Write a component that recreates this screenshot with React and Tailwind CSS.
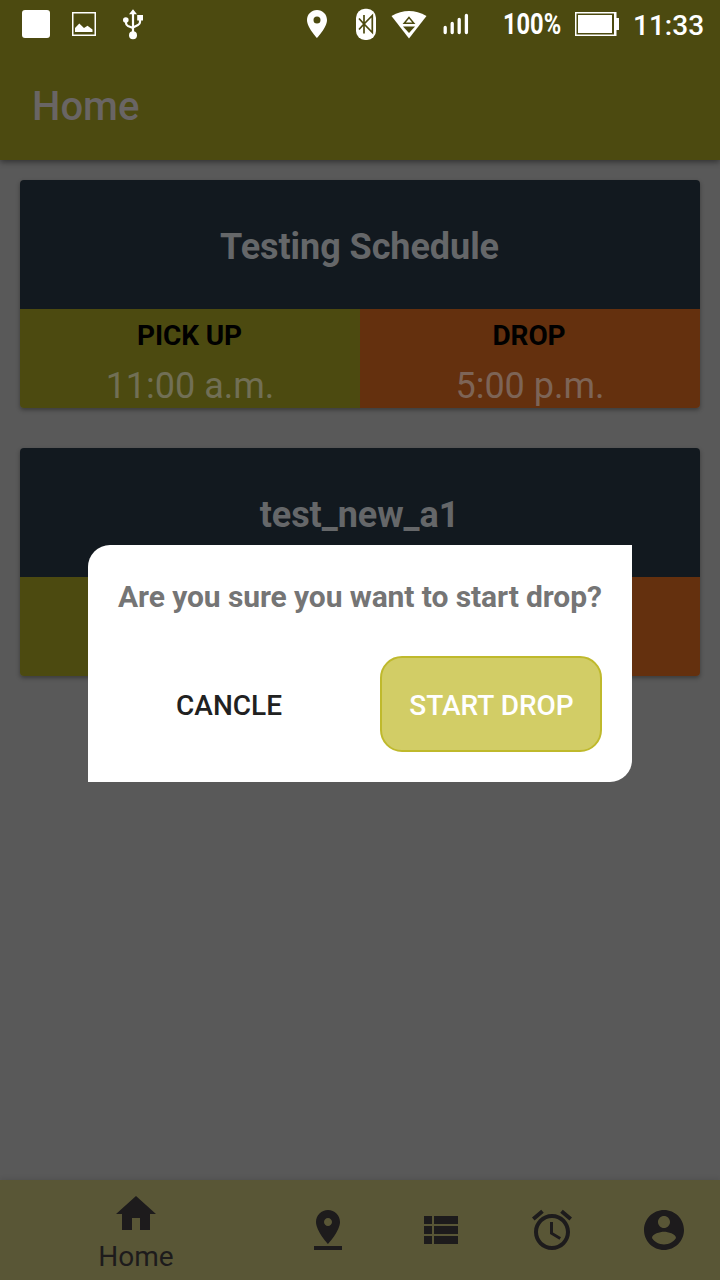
const schedules = [
  { id: 1, name: "Testing Schedule", pickup: "11:00 a.m.", drop: "5:00 p.m." },
  { id: 2, name: "test_new_a1", pickup: null, drop: null },
]

const tabs = [
  { id: "stops", path: "M18 8c0-3.31-2.69-6-6-6S6 4.69 6 8c0 4.5 6 11 6 11s6-6.5 6-11zm-8 0c0-1.1.9-2 2-2s2 .9 2 2-.89 2-2 2c-1.1 0-2-.9-2-2zM5 20v2h14v-2H5z" },
  { id: "list", path: "M4 14h4v-4H4v4zm0 5h4v-4H4v4zM4 9h4V5H4v4zm5 5h12v-4H9v4zm0 5h12v-4H9v4zM9 5v4h12V5H9z" },
  { id: "alarm", path: "M22 5.72l-4.6-3.86-1.29 1.53 4.6 3.86L22 5.72zM7.88 3.39L6.6 1.86 2 5.71l1.29 1.53 4.59-3.85zM12.5 8H11v6l4.75 2.85.75-1.23-4-2.37V8zM12 4c-4.97 0-9 4.03-9 9s4.02 9 9 9c4.97 0 9-4.03 9-9s-4.03-9-9-9zm0 16c-3.87 0-7-3.13-7-7s3.13-7 7-7 7 3.13 7 7-3.13 7-7 7z" },
  { id: "account", path: "M12 2C6.48 2 2 6.48 2 12s4.48 10 10 10 10-4.48 10-10S17.52 2 12 2zm0 3c1.66 0 3 1.34 3 3s-1.34 3-3 3-3-1.34-3-3 1.34-3 3-3zm0 14.2c-2.5 0-4.71-1.28-6-3.22.03-1.99 4-3.08 6-3.08 1.99 0 5.97 1.09 6 3.08-1.29 1.94-3.5 3.22-6 3.22z" },
]

const TabIcon = ({ path }) => (
  <svg className="size-12 shrink-0" viewBox="0 0 24 24" fill="currentColor">
    <path d={path} />
  </svg>
)

const StatusBar = () => (
  <div className="flex h-12 items-center pl-[22px] text-white">
    <div className="size-7 shrink-0 rounded-[3px] bg-white" />
    <svg className="ml-[22px] h-6 w-6 shrink-0" viewBox="0 0 24 24" fill="none">
      <rect x="0.75" y="0.75" width="22.5" height="22.5" stroke="#fff" strokeWidth="1.5" />
      <path d="M3 20V16L7.3 11.5L12 16L15.5 13.8L20.5 17.5V20Z" fill="#fff" />
    </svg>
    <svg className="ml-[26px] h-8 w-[22px] shrink-0" viewBox="0 0 22 32" fill="none" stroke="#fff" strokeWidth="2.2">
      <path d="M11 4V26M4 12V15Q4 17 6 18L11 20M18 10V14Q18 16 16 17L11 19.5" />
      <circle cx="11" cy="27.3" r="4" fill="#fff" stroke="none" />
      <circle cx="3.8" cy="12" r="2.8" fill="#fff" stroke="none" />
      <path d="M15.2 7H21V12.5H15.2ZM7 6.2L11 1.2L15 6.2Z" fill="#fff" stroke="none" />
    </svg>
    <svg className="ml-[162px] h-[30px] w-[22px] shrink-0" viewBox="0 0 22 30" fill="#fff">
      <path fillRule="evenodd" d="M11 1C5.4 1 1 5.4 1 11C1 18.5 11 29 11 29S21 18.5 21 11C21 5.4 16.6 1 11 1ZM11 7.5A3.5 3.5 0 1 1 11 14.5A3.5 3.5 0 1 1 11 7.5Z" />
    </svg>
    <svg className="ml-7 h-8 w-5 shrink-0" viewBox="0 0 20 32" fill="none">
      <rect y="0.8" width="20" height="31.2" rx="9" fill="#fff" />
      <path d="M3 10.5L8 16L16.3 7.5V24.5L8 16L3 21.5M8 7V25.5" stroke="#4c4a10" strokeWidth="1.7" />
    </svg>
    <svg className="ml-[15px] h-[29px] w-9 shrink-0" viewBox="0 0 36 29">
      <path d="M.5 6Q18-4 35.5 6L18 28.5Z" fill="#fff" />
      <path d="M18 7.5L22.8 13.2H13.2Z" fill="none" stroke="#4c4a10" strokeWidth="1.5" />
      <path d="M12 16.5H24L18 23Z" fill="#4c4a10" />
    </svg>
    <svg className="ml-4 h-6 w-[26px] shrink-0" viewBox="0 0 26 24" stroke="#fff" strokeWidth="3.3" strokeLinecap="round">
      <path d="M2.2 15.5V20.5M9.2 11.5V20.5M16.2 7.5V20.5M23.4 3.5V20.5" />
    </svg>
    <span className="ml-[34px] w-[59px] shrink-0 text-[29px] leading-none font-bold">
      <span className="inline-block origin-left scale-x-[0.815] pt-px">100%</span>
    </span>
    <svg className="ml-[13px] h-6 w-11 shrink-0" viewBox="0 0 44 24" fill="none">
      <rect x="0.75" y="0.75" width="39.5" height="22.5" stroke="#fff" strokeWidth="1.5" />
      <path d="M3 3H37V21H3ZM39 0H41.5V6H44V18H41.5V24H39Z" fill="#fff" />
    </svg>
    <span className="ml-[14px] pt-[3px] text-[28px] leading-none font-medium whitespace-nowrap">11:33</span>
  </div>
)

const ScheduleCard = ({ schedule }) => (
  <div className="h-[228px] overflow-hidden rounded-[4px] shadow-[0_2px_4px_rgba(0,0,0,0.35)]">
    <div className="flex h-[129px] items-center justify-center bg-[#12191f] pt-[5px] pr-px text-4xl font-bold tracking-[-0.06px] text-[#656769]">
      {schedule.name}
    </div>
    <div className="grid h-[99px] grid-cols-2 text-center">
      <div className="bg-[#4c4a10]">
        {schedule.pickup && (
          <>
            <div className="pt-[6px] pr-px text-[28px] leading-[42px] font-bold tracking-[-0.1px] text-black">PICK UP</div>
            <div className="pt-[5px] text-4xl leading-[48px] text-[#716f55]">{schedule.pickup}</div>
          </>
        )}
      </div>
      <div className="bg-[#64300e]">
        {schedule.drop && (
          <>
            <div className="pt-[6px] pr-[2px] text-[28px] leading-[42px] font-bold tracking-[-0.1px] text-black">DROP</div>
            <div className="pt-[5px] text-4xl leading-[48px] text-[#7d6456]">{schedule.drop}</div>
          </>
        )}
      </div>
    </div>
  </div>
)

const ConfirmDialog = () => (
  <div className="absolute inset-0 flex items-center justify-center pt-[47px]">
    <div className="h-[237px] w-[544px] rounded-tl-[22px] rounded-br-[22px] bg-white px-[30px] pt-[30px]">
      <h2 className="text-[30px] leading-[43px] font-bold tracking-[-0.09px] whitespace-nowrap text-[#757575]">
        Are you sure you want to start drop?
      </h2>
      <div className="mt-[38px] flex justify-between text-[28px] font-medium">
        <button className="h-24 w-[222px] pt-[4px] text-[#212121]">CANCLE</button>
        <button className="h-24 w-[222px] rounded-[22px] border-2 border-[#bfb92c] bg-[#d2cd66] pt-[4px] pl-px whitespace-nowrap text-white">
          START DROP
        </button>
      </div>
    </div>
  </div>
)

const App = () => {
  return (
    <div className="relative flex h-[1280px] w-[720px] flex-col overflow-hidden bg-[#595959] font-['Roboto',sans-serif]">
      <header className="h-40 shrink-0 bg-[#4c4a10] shadow-[0_2px_6px_rgba(0,0,0,0.45)]">
        <StatusBar />
        <h1 className="pt-[29px] pl-8 text-[40px] leading-[60px] font-medium text-[#696564]">Home</h1>
      </header>
      <main className="flex flex-1 flex-col gap-10 p-5">
        {schedules.map(schedule => (
          <ScheduleCard key={schedule.id} schedule={schedule} />
        ))}
      </main>
      <nav className="flex h-[100px] shrink-0 bg-[#595636] text-[#1d1b1c] shadow-[0_-1px_5px_rgba(0,0,0,0.1)]">
        <div className="flex w-[272px] flex-col items-center pt-[10px]">
          <TabIcon path="M10 20v-6h4v6h5v-8h3L12 3 2 12h3v8z" />
          <span className="pt-px text-[28px] leading-[36px]">Home</span>
        </div>
        {tabs.map(tab => (
          <div key={tab.id} className="flex w-28 items-center justify-center">
            <TabIcon path={tab.path} />
          </div>
        ))}
      </nav>
      <ConfirmDialog />
    </div>
  )
}

export default App
